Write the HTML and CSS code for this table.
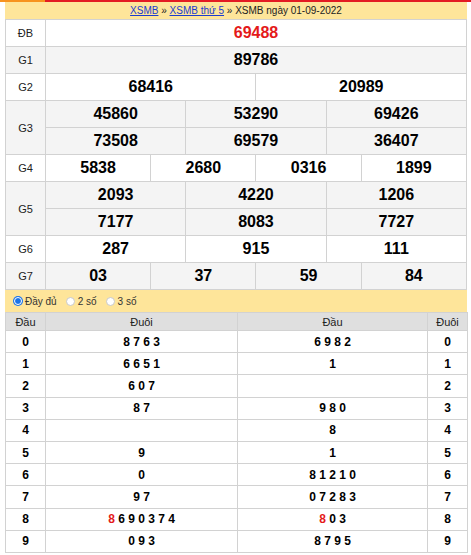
FILE: index.html
```html
<!DOCTYPE html>
<html lang="vi">
<head>
<meta charset="utf-8">
<title>XSMB ngày 01-09-2022</title>
<link rel="stylesheet" href="styles.css">
</head>
<body>
<div class="topbar"><span class="topbar-orange"></span><span class="topbar-red"></span></div>
<div class="page">
  <div class="crumb">
    <a href="#">XSMB</a> » <a href="#">XSMB thứ 5</a> » XSMB ngày 01-09-2022
  </div>
  <table class="kq">
    <colgroup><col class="c-lbl"><col span="12"></colgroup>
    <tr class="w"><td class="lbl">ĐB</td><td colspan="12" class="db">69488</td></tr>
    <tr class="g"><td class="lbl">G1</td><td colspan="12">89786</td></tr>
    <tr class="w"><td class="lbl">G2</td><td colspan="6">68416</td><td colspan="6">20989</td></tr>
    <tr class="g"><td class="lbl" rowspan="2">G3</td><td colspan="4">45860</td><td colspan="4">53290</td><td colspan="4">69426</td></tr>
    <tr class="g"><td colspan="4">73508</td><td colspan="4">69579</td><td colspan="4">36407</td></tr>
    <tr class="w"><td class="lbl">G4</td><td colspan="3">5838</td><td colspan="3">2680</td><td colspan="3">0316</td><td colspan="3">1899</td></tr>
    <tr class="g"><td class="lbl" rowspan="2">G5</td><td colspan="4">2093</td><td colspan="4">4220</td><td colspan="4">1206</td></tr>
    <tr class="g"><td colspan="4">7177</td><td colspan="4">8083</td><td colspan="4">7727</td></tr>
    <tr class="w"><td class="lbl">G6</td><td colspan="4">287</td><td colspan="4">915</td><td colspan="4">111</td></tr>
    <tr class="g"><td class="lbl">G7</td><td colspan="3">03</td><td colspan="3">37</td><td colspan="3">59</td><td colspan="3">84</td></tr>
  </table>
  <div class="opts">
    <label class="opt"><span class="radio on"></span>Đầy đủ</label>
    <label class="opt"><span class="radio"></span>2 số</label>
    <label class="opt"><span class="radio"></span>3 số</label>
  </div>
  <table class="loto">
    <colgroup><col class="c-dau"><col class="c-duoi"><col class="c-duoi2"><col class="c-dau"></colgroup>
    <tr class="head"><th>Đầu</th><th>Đuôi</th><th>Đầu</th><th>Đuôi</th></tr>
    <tr><td>0</td><td>8 7 6 3</td><td>6 9 8 2</td><td>0</td></tr>
    <tr><td>1</td><td>6 6 5 1</td><td>1</td><td>1</td></tr>
    <tr><td>2</td><td>6 0 7</td><td></td><td>2</td></tr>
    <tr><td>3</td><td>8 7</td><td>9 8 0</td><td>3</td></tr>
    <tr><td>4</td><td></td><td>8</td><td>4</td></tr>
    <tr><td>5</td><td>9</td><td>1</td><td>5</td></tr>
    <tr><td>6</td><td>0</td><td>8 1 2 1 0</td><td>6</td></tr>
    <tr><td>7</td><td>9 7</td><td>0 7 2 8 3</td><td>7</td></tr>
    <tr><td>8</td><td><span class="red">8</span> 6 9 0 3 7 4</td><td><span class="red">8</span> 0 3</td><td>8</td></tr>
    <tr><td>9</td><td>0 9 3</td><td>8 7 9 5</td><td>9</td></tr>
  </table>
</div>
</body>
</html>
```

FILE: styles.css
```css
html, body {
  margin: 0;
  padding: 0;
  background: #fff;
}
body {
  font-family: "Liberation Sans", Arial, sans-serif;
  color: #111;
}
.topbar {
  display: flex;
  height: 2px;
}
.topbar-orange {
  width: 45px;
  background: #f7931e;
}
.topbar-red {
  flex: 1;
  background: #e31b23;
}
.page {
  width: 462px;
  margin-left: 5px;
}
.crumb {
  height: 17px;
  line-height: 17px;
  background: #fee59a;
  text-align: center;
  font-size: 10px;
  color: #222;
}
.crumb a {
  color: #1a3ccf;
  text-decoration: underline;
}
table {
  width: 462px;
  border-collapse: collapse;
  table-layout: fixed;
}
td, th {
  border: 1px solid #d2d2d2;
  padding: 0;
  text-align: center;
}
.c-lbl { width: 40px; }
.kq tr { height: 27px; }
.kq td {
  font-size: 16px;
  font-weight: bold;
  color: #000;
}
.kq td.lbl {
  font-size: 11px;
  font-weight: normal;
  color: #222;
}
.kq td.db { color: #e41a1a; }
.kq tr.g td { background: #f4f4f4; }
.kq tr.w td { background: #fff; }
.opts {
  height: 22px;
  background: #fee59a;
  display: flex;
  align-items: center;
  gap: 9px;
  padding-left: 9px;
  font-size: 10px;
  color: #333;
}
.opt {
  display: flex;
  align-items: center;
  gap: 3px;
}
.radio {
  width: 9px;
  height: 9px;
  border-radius: 50%;
  background: #fff;
  border: 1px solid #c9c9c9;
  box-sizing: border-box;
}
.radio.on {
  background: #1a73e8;
  border: 1px solid #fff;
  box-shadow: 0 0 0 1px #1a73e8;
  width: 8px;
  height: 8px;
}
.c-dau { width: 40px; }
.c-duoi { width: 192px; }
.c-duoi2 { width: 190px; }
.loto tr.head { height: 18px; }
.loto th {
  background: #dfdfdf;
  font-size: 11px;
  font-weight: normal;
  color: #222;
}
.loto tr { height: 22.2px; }
.loto td {
  font-size: 12px;
  font-weight: bold;
  color: #000;
  background: #fff;
}
.loto .red { color: #e41a1a; }
```
